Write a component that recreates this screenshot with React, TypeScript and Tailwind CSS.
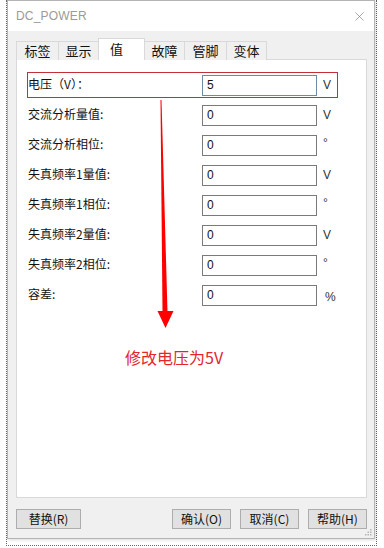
import { X } from "lucide-react"

interface FieldRow {
  label: string
  value: string
  unit: string
}

const rows: FieldRow[] = [
  { label: "电压（V）：", value: "5", unit: "V" },
  { label: "交流分析量值:", value: "0", unit: "V" },
  { label: "交流分析相位:", value: "0", unit: "°" },
  { label: "失真频率1量值:", value: "0", unit: "V" },
  { label: "失真频率1相位:", value: "0", unit: "°" },
  { label: "失真频率2量值:", value: "0", unit: "V" },
  { label: "失真频率2相位:", value: "0", unit: "°" },
  { label: "容差:", value: "0", unit: "%" }
]

const tabs = ["标签", "显示", "值", "故障", "管脚", "变体"]
const tabWidths = ["w-[43px]", "w-[41px]", "w-[47px]", "w-[41px]", "w-[43px]", "w-[41px]"]

function DialogButton({ label, width }: { label: string; width: string }) {
  return (
    <button
      className={`${width} h-[20px] bg-[#e1e1e1] border border-[#adadad] text-[12px] leading-[18px] text-[#111]`}>
      {label}
    </button>
  )
}

export default function App() {
  return (
    <div className="w-[384px] h-[548px] bg-white overflow-hidden font-['Microsoft_YaHei','Noto_Sans_CJK_SC',sans-serif]">
      <div className="ml-[6px] w-[371px] h-[546px] border-x border-b border-dotted border-[#666]">
        <div className="w-[368px] h-[539px] flex flex-col bg-[#f0f0f0] border border-[#b4b4b4] shadow-[1px_1px_3px_rgba(0,0,0,0.15)]">
          {/* title bar */}
          <div className="h-[30px] shrink-0 bg-white flex items-center justify-between pl-[8px] pr-[7px]">
            <span className="text-[12px] text-[#9a9a9a] font-['Liberation_Sans',sans-serif] tracking-[0.2px]">
              DC_POWER
            </span>
            <X size={15} strokeWidth={1} className="text-[#777]" />
          </div>

          <div className="flex flex-col pl-[8px] pr-[7px] pt-[7px]">
            {/* tabs */}
            <div className="flex items-end h-[22px] relative z-10">
              {tabs.map((t, i) => {
                const active = t === "值"
                return (
                  <div
                    key={t}
                    className={`${tabWidths[i]} ${i > 0 ? "-ml-px" : ""} border-x border-t border-[#d9d9d9] flex justify-center text-[13px] text-[#111] ${
                      active
                        ? "h-[22px] bg-white items-start pt-[1px] leading-[18px] pr-[10px]"
                        : "h-[19px] bg-[#f0f0f0] items-center leading-[18px]"
                    }`}>
                    {t}
                  </div>
                )
              })}
            </div>

            {/* panel */}
            <div className="relative -mt-px h-[439px] w-[351px] bg-white border border-[#d9d9d9] pt-[10px]">
              {rows.map((r, i) => (
                <div key={r.label} className="relative h-[30px] flex items-center pl-[11px]">
                  {i === 0 && (
                    <div className="absolute left-[10px] top-[2px] w-[311px] h-[26px] border border-[#c4303a]" />
                  )}
                  <span className="w-[174px] text-[12px] leading-[16px] text-[#111] -mt-[2px]">
                    {r.label}
                  </span>
                  <div
                    className={`w-[115px] h-[21px] border ${
                      i === 0 ? "border-[#6d8aa6]" : "border-[#7a7a7a]"
                    } bg-white pl-[4px] flex items-center text-[12px] text-[#111] font-['Liberation_Sans',sans-serif]`}>
                    {r.value}
                  </div>
                  <span
                    className={`text-[12px] text-[#333] font-['Liberation_Sans',sans-serif] ${
                      r.unit === "%" ? "ml-[8px] mt-[4px]" : "ml-[6px]"
                    } ${r.unit === "°" ? "-mt-[4px]" : ""}`}>
                    {r.unit}
                  </span>
                </div>
              ))}

              <div className="mt-[37px] pl-[108px] text-[16px] leading-[20px] text-[#e4262c]">
                修改电压为5V
              </div>

              {/* annotation arrow */}
              <svg
                className="absolute left-0 top-0"
                width="351"
                height="300"
                viewBox="0 0 351 300">
                <polygon points="143.5,40 144.5,40 150.5,252 145.5,252" fill="#ff0000" />
                <polygon points="140.5,251 156.5,251 148.5,268" fill="#ff0000" />
              </svg>
            </div>

            {/* buttons */}
            <div className="flex items-center mt-[11px] pr-[0px]">
              <DialogButton label="替换(R)" width="w-[65px]" />
              <div className="flex-1" />
              <DialogButton label="确认(O)" width="w-[59px]" />
              <div className="w-[9px]" />
              <DialogButton label="取消(C)" width="w-[59px]" />
              <div className="w-[9px]" />
              <DialogButton label="帮助(H)" width="w-[59px]" />
            </div>
          </div>

          <div className="flex-1 flex items-end justify-end pr-[2px] pb-[2px]">
            <svg width="7" height="7" viewBox="0 0 7 7">
              <rect x="5" y="0" width="1.5" height="1.5" fill="#b5b5b5" />
              <rect x="2.5" y="2.5" width="1.5" height="1.5" fill="#b5b5b5" />
              <rect x="5" y="2.5" width="1.5" height="1.5" fill="#b5b5b5" />
              <rect x="0" y="5" width="1.5" height="1.5" fill="#b5b5b5" />
              <rect x="2.5" y="5" width="1.5" height="1.5" fill="#b5b5b5" />
              <rect x="5" y="5" width="1.5" height="1.5" fill="#b5b5b5" />
            </svg>
          </div>
        </div>
      </div>
    </div>
  )
}
